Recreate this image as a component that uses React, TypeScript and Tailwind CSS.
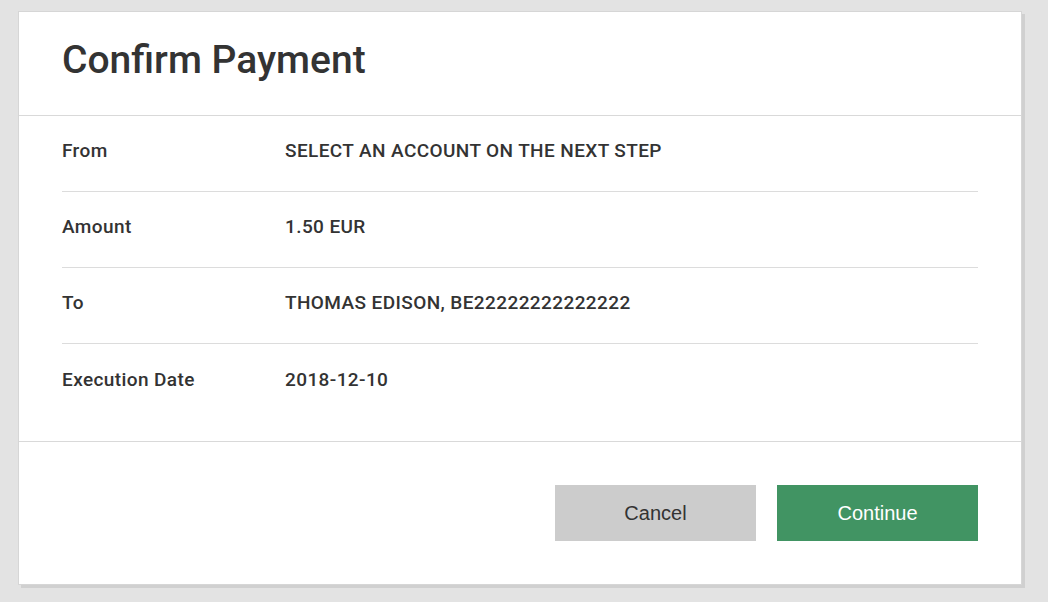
import React from "react";

const rows = [
  { label: "From", value: "SELECT AN ACCOUNT ON THE NEXT STEP" },
  { label: "Amount", value: "1.50 EUR" },
  { label: "To", value: "THOMAS EDISON, BE22222222222222" },
  { label: "Execution Date", value: "2018-12-10" },
];

const App = () => {
  return (
    <div className="min-h-[602px] w-full bg-[#e3e3e3] pt-[11px] pl-[18px]">
      <div className="w-[1004px] h-[574px] bg-white border border-[#d6d6d6] shadow-[3px_3px_0_#d0d0d0] flex flex-col font-['Roboto',sans-serif] text-[#333333]">
        <div className="h-[104px] flex items-center px-[43px] border-b border-[#d9d9d9]">
          <h2 className="text-[39px] font-medium leading-none pb-[6px]">
            Confirm Payment
          </h2>
        </div>
        <div className="px-[43px] pb-[21px] border-b border-[#d9d9d9]">
          {rows.map((row, index) => (
            <div
              key={index}
              className={`h-[76px] flex items-center pb-[4px] text-[19px] font-medium tracking-[0.4px] ${
                index < rows.length - 1 ? "border-b border-[#dcdcdc]" : ""
              }`}
            >
              <p className="w-[223px]">{row.label}</p>
              <p>{row.value}</p>
            </div>
          ))}
        </div>
        <div className="flex-1 flex items-center justify-end gap-[21px] pr-[43px] font-['Liberation_Sans',Arial,sans-serif] text-[20px]">
          <button className="w-[201px] h-[56px] bg-[#cccccc] text-[#333333]">Cancel</button>
          <button className="w-[201px] h-[56px] bg-[#419463] text-white">Continue</button>
        </div>
      </div>
    </div>
  );
};

export default App;
